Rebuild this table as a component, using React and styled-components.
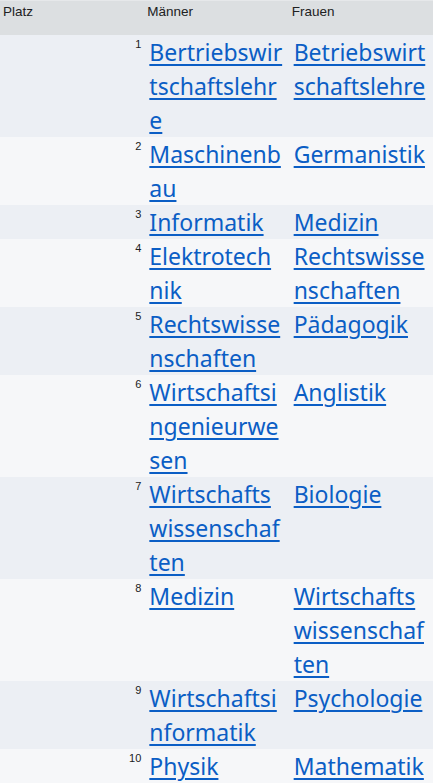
import React from "react";
import styled, { createGlobalStyle } from "styled-components";

const Global = createGlobalStyle`
  html, body { margin: 0; padding: 0; background: #f6f7f9; }
  body { font-family: "Liberation Sans", Arial, sans-serif; }
`;

const Table = styled.table`
  width: 100%;
  border-collapse: collapse;
  table-layout: fixed;
`;

const HeadCell = styled.th`
  height: 34px;
  box-sizing: border-box;
  padding: 3px 3px 0;
  text-align: left;
  vertical-align: top;
  font-weight: normal;
  font-size: 13.5px;
  line-height: 15px;
  color: #202122;
  background: #dcdfe1;
  border-top: 1px solid #e6e8ea;
`;

const Row = styled.tr`
  background: ${(p) => (p.$odd ? "#eceff4" : "#f6f7f9")};
`;

const RankCell = styled.td`
  padding: 3px 3px 0;
  text-align: right;
  vertical-align: top;
  font-size: 11px;
  line-height: 12px;
  color: #202122;
`;

const NameCell = styled.td`
  padding: 0 4px 0 5px;
  vertical-align: top;
  font-family: "Noto Sans", "Open Sans", sans-serif;
  font-size: 23px;
  line-height: 34px;
  word-break: break-all;
`;

const Link = styled.a`
  color: #0b5ec5;
  text-decoration: underline;
  text-decoration-thickness: 2px;
  text-underline-offset: 3px;
  cursor: pointer;
`;

const rows = [
  ["Bertriebswirtschaftslehre", "Betriebswirtschaftslehre"],
  ["Maschinenbau", "Germanistik"],
  ["Informatik", "Medizin"],
  ["Elektrotechnik", "Rechtswissenschaften"],
  ["Rechtswissenschaften", "Pädagogik"],
  ["Wirtschaftsingenieurwesen", "Anglistik"],
  ["Wirtschaftswissenschaften", "Biologie"],
  ["Medizin", "Wirtschaftswissenschaften"],
  ["Wirtschaftsinformatik", "Psychologie"],
  ["Physik", "Mathematik"],
];

export default function App() {
  return (
    <>
      <Global />
      <Table>
        <thead>
          <tr>
            <HeadCell>Platz</HeadCell>
            <HeadCell>Männer</HeadCell>
            <HeadCell>Frauen</HeadCell>
          </tr>
        </thead>
        <tbody>
          {rows.map(([m, f], i) => (
            <Row key={i} $odd={i % 2 === 0}>
              <RankCell>{i + 1}</RankCell>
              <NameCell>
                <Link>{m}</Link>
              </NameCell>
              <NameCell>
                <Link>{f}</Link>
              </NameCell>
            </Row>
          ))}
        </tbody>
      </Table>
    </>
  );
}
